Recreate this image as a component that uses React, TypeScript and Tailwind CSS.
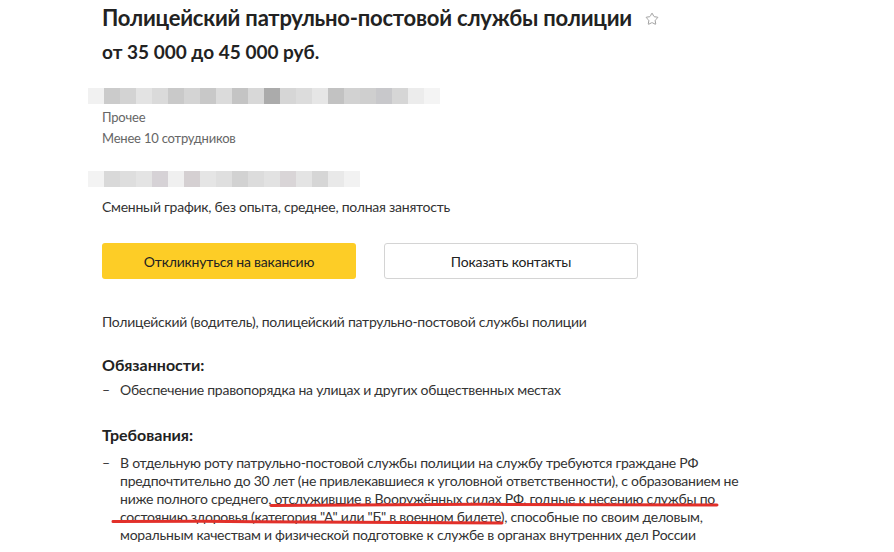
import { Star } from 'lucide-react';

const BLUR_TOP = [
  '#f1f1f1', '#cbcbcb', '#d3d3d3', '#e3e3e3', '#dadada', '#c9c9c9', '#d4d4d4', '#c8c8c8',
  '#dbdbdb', '#c4c4c4', '#d8d8d8', '#ababab', '#d6d6d6', '#dcdcdc', '#e6e6e6', '#c2c2c2',
  '#d2d2d2', '#cfcfcf', '#c8c8cb', '#d6d6d6', '#ececec', '#f4f4f4',
];

const BLUR_BOTTOM = [
  '#f3f3f3', '#d9d9d9', '#dedede', '#e4e4e4', '#d6d2d6', '#f0f0f0', '#d5d0d2', '#e5e5e5',
  '#dfdfdf', '#d2d2d2', '#dcdcdc', '#e2e2e2', '#d9d5d7', '#e4e4e4', '#d6d6d6', '#e9e9e9',
  '#f2f2f2',
];

const REQUIREMENTS = [
  'В отдельную роту патрульно-постовой службы полиции на службу требуются граждане РФ',
  'предпочтительно до 30 лет (не привлекавшиеся к уголовной ответственности), с образованием не',
  'ниже полного среднего, отслужившие в Вооружённых силах РФ, годные к несению службы по',
  'состоянию здоровья (категория "А" или "Б" в военном билете), способные по своим деловым,',
  'моральным качествам и физической подготовке к службе в органах внутренних дел России',
];

function Blur({ cells }: { cells: string[] }) {
  return (
    <div className="flex h-[16px] -ml-[14px]">
      {cells.map((c, i) => (
        <div key={i} className="w-[16px] h-full" style={{ background: c }} />
      ))}
    </div>
  );
}

export default function App() {
  return (
    <div className="relative w-[894px] h-[552px] overflow-hidden bg-white text-[#333] font-['Lato','Noto_Sans',sans-serif]">
      <div className="pl-[102px] pt-[4px] w-[780px]">
        <div className="flex items-center gap-[13px] h-[28px]">
          <h1 className="text-[22px] leading-[28px] font-bold text-[#222] tracking-[-0.22px]">
            Полицейский патрульно-постовой службы полиции
          </h1>
          <Star className="w-[14px] h-[14px] text-[#999] mt-[2px]" strokeWidth={1.6} />
        </div>
        <div className="mt-[8px] text-[19px] leading-[24px] font-bold text-[#222]">от 35 000 до 45 000 руб.</div>

        <div className="mt-[24px]">
          <Blur cells={BLUR_TOP} />
        </div>
        <div className="mt-[3px] text-[13px] leading-[21px] text-[#666] tracking-[-0.2px]">Прочее</div>
        <div className="text-[13px] leading-[21px] text-[#666] tracking-[-0.2px]">Менее 10 сотрудников</div>

        <div className="mt-[22px]">
          <Blur cells={BLUR_BOTTOM} />
        </div>
        <div className="mt-[10px] text-[14px] leading-[20px] tracking-[-0.25px]">
          Сменный график, без опыта, среднее, полная занятость
        </div>

        <div className="mt-[26px] flex gap-[28px]">
          <button className="w-[254px] h-[36px] rounded-[3px] bg-[#fdcd26] text-[14px] text-[#222] tracking-[-0.2px]">
            Откликнуться на вакансию
          </button>
          <button className="w-[254px] h-[36px] rounded-[3px] border border-[#d4d4d4] bg-white text-[14px] text-[#222] tracking-[-0.2px]">
            Показать контакты
          </button>
        </div>

        <p className="mt-[33px] text-[14px] leading-[20px] tracking-[-0.25px]">
          Полицейский (водитель), полицейский патрульно-постовой службы полиции
        </p>

        <h2 className="mt-[22px] text-[16px] leading-[22px] font-bold text-[#222]">Обязанности:</h2>
        <div className="mt-[4px] flex text-[14px] leading-[20px] tracking-[-0.25px]">
          <span className="w-[18px] shrink-0">–</span>
          <span>Обеспечение правопорядка на улицах и других общественных местах</span>
        </div>

        <h2 className="mt-[24px] text-[16px] leading-[22px] font-bold text-[#222]">Требования:</h2>
        <div className="mt-[8px] flex text-[14px] leading-[18px] tracking-[-0.25px]">
          <span className="w-[18px] shrink-0">–</span>
          <div className="flex flex-col">
            {REQUIREMENTS.map((line) => (
              <span key={line} className="whitespace-nowrap">{line}</span>
            ))}
          </div>
        </div>
      </div>

      <svg className="absolute left-0 top-0 pointer-events-none" width="894" height="552">
        <path d="M271 505.5 C 400 504, 600 504, 717 505" stroke="#e2302a" strokeWidth="3" fill="none" strokeLinecap="round" />
        <path d="M113 521.5 C 250 521, 400 522, 502 523" stroke="#e2302a" strokeWidth="3" fill="none" strokeLinecap="round" />
      </svg>
    </div>
  );
}
